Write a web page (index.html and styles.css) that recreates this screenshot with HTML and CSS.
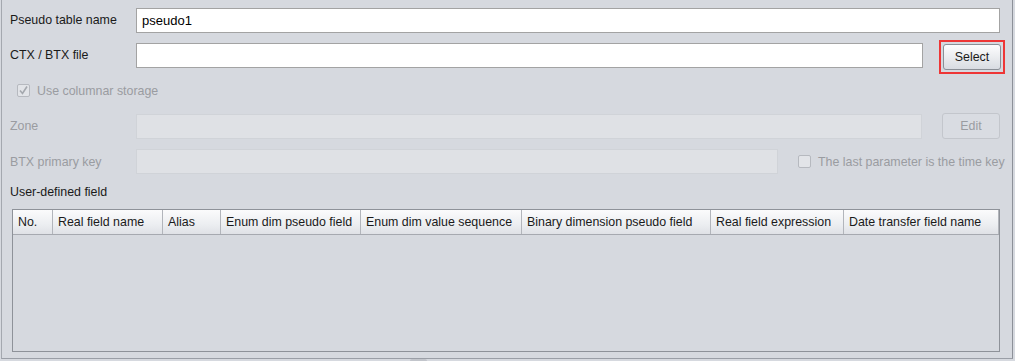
FILE: index.html
```html
<!DOCTYPE html>
<html lang="en">
<head>
  <meta charset="UTF-8" />
  <title>Pseudo table</title>
  <link rel="stylesheet" href="styles.css">
</head>
<body>
  <div class="panel">
    <div class="row row-name">
      <label class="lbl">Pseudo table name</label>
      <input type="text" class="field" value="pseudo1" />
    </div>

    <div class="row row-file">
      <label class="lbl">CTX / BTX file</label>
      <input type="text" class="field" value="" />
      <span class="focus-ring"><button class="btn">Select</button></span>
    </div>

    <div class="row row-check">
      <span class="check checked">
        <svg width="11" height="11" viewBox="0 0 11 11"><path d="M2 5.5 L4.5 8.5 L9 1.5" fill="none" stroke="#a4a8ae" stroke-width="1.6"/></svg>
      </span>
      <span class="check-text">Use columnar storage</span>
    </div>

    <div class="row row-zone">
      <label class="lbl off">Zone</label>
      <input type="text" class="field" disabled />
      <button class="btn" disabled>Edit</button>
    </div>

    <div class="row row-key">
      <label class="lbl off">BTX primary key</label>
      <input type="text" class="field key-field" disabled />
      <span class="check"></span>
      <span class="check-text">The last parameter is the time key</span>
    </div>

    <div class="section">User-defined field</div>

    <div class="grid">
      <div class="grid-head">
        <div class="col" style="width:40px">No.</div>
        <div class="col" style="width:110px">Real field name</div>
        <div class="col" style="width:58px">Alias</div>
        <div class="col" style="width:140px">Enum dim pseudo field</div>
        <div class="col" style="width:161px">Enum dim value sequence</div>
        <div class="col" style="width:189px">Binary dimension pseudo field</div>
        <div class="col" style="width:133px">Real field expression</div>
        <div class="col last">Date transfer field name</div>
      </div>
    </div>
  </div>
  <div class="status">
    <span class="grip"></span>
  </div>
</body>
</html>
```

FILE: styles.css
```css
html, body {
  margin: 0;
  padding: 0;
}

body {
  width: 1015px;
  height: 361px;
  overflow: hidden;
  background-color: #d6d9df;
  font-family: "Liberation Sans", Arial, sans-serif;
  font-size: 12.4px;
  color: #1a1a1a;
}

.panel {
  box-sizing: border-box;
  width: 1012px;
  height: 359px;
  margin-left: 1px;
  padding: 8px 12px 0 8px;
  border-left: 1px solid #a4a8af;
  border-right: 1px solid #8d9199;
  border-bottom: 1px solid #9a9ea6;
}

.row {
  display: flex;
  align-items: center;
}

.lbl {
  width: 126px;
  flex: none;
}

.lbl.off {
  color: #9a9ca1;
}

.field {
  box-sizing: border-box;
  flex: 1;
  height: 25px;
  margin: 0;
  padding: 0 5px;
  border: 1px solid #a3a3a3;
  background: #fff;
  font-family: inherit;
  font-size: 13px;
  color: #000;
  outline: none;
}

.field:disabled {
  background: #dfe1e5;
  border-color: #d0d3d8;
}

.row-name {
  height: 24px;
}

.row-file {
  margin-top: 11px;
  height: 26px;
  align-items: flex-start;
}

.row-file .lbl {
  line-height: 25px;
}

.row-file .field {
  margin-right: 16px;
}

.focus-ring {
  display: block;
  padding: 2px;
  margin: -3px -5px -5px 0;
  border: 2px solid #ee3636;
}

.btn {
  box-sizing: border-box;
  display: block;
  width: 58px;
  height: 26px;
  margin: 0;
  padding: 0;
  border: 1px solid #8b8f96;
  border-radius: 3px;
  background: linear-gradient(#fdfdfe, #e9ebee 55%, #d9dce2);
  font-family: inherit;
  font-size: 12.4px;
  color: #1a1a1a;
}

.btn:disabled {
  border-color: #c3c6cc;
  background: #d9dce2;
  color: #9a9ca1;
}

.row-check {
  margin-top: 15px;
  height: 13px;
  padding-left: 7px;
}

.check {
  box-sizing: border-box;
  width: 13px;
  height: 13px;
  flex: none;
  border: 1px solid #b6b9bf;
  border-radius: 2px;
  background: #e2e4e8;
  display: flex;
  align-items: center;
  justify-content: center;
}

.check-text {
  margin-left: 7px;
  color: #9a9ca1;
  white-space: nowrap;
}

.row-zone {
  margin-top: 16px;
  height: 26px;
}

.row-zone .field {
  margin-right: 20px;
}

.row-key {
  margin-top: 10px;
  height: 25px;
}

.key-field {
  flex: none;
  width: 642px;
  margin-right: 20px;
}

.row-key .check-text {
  margin-left: 7px;
  margin-right: -6px;
}

.section {
  margin-top: 11px;
  height: 14px;
  line-height: 14px;
}

.grid {
  box-sizing: border-box;
  margin-top: 10px;
  margin-left: 2px;
  height: 143px;
  border: 1px solid #8e9299;
}

.grid-head {
  display: flex;
  height: 24px;
  border-bottom: 1px solid #a6a9b0;
  background: linear-gradient(#fbfbfc, #eceef1 60%, #dfe1e6);
}

.col {
  box-sizing: border-box;
  flex: none;
  padding-left: 5px;
  line-height: 24px;
  white-space: nowrap;
  border-right: 1px solid #b2b5bb;
}

.col.last {
  flex: 1;
}

.status {
  height: 2px;
}

.grip {
  display: block;
  width: 17px;
  height: 2px;
  margin-left: 410px;
  background: #c2c5cb;
  border-radius: 2px 2px 0 0;
}
```
